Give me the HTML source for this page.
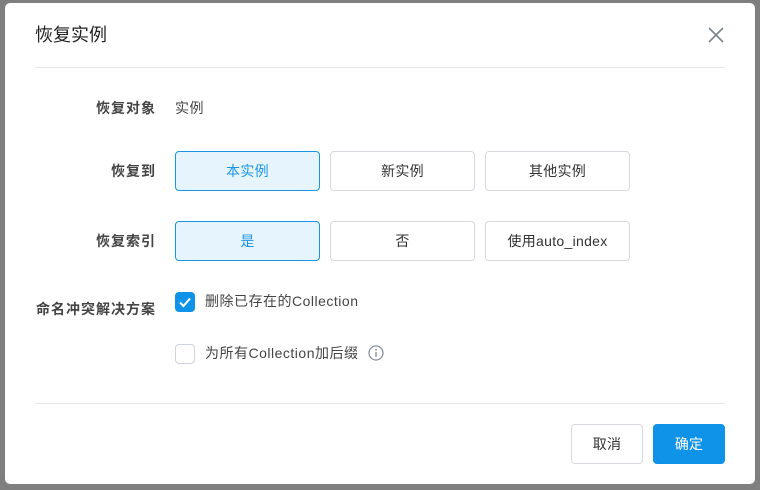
<!DOCTYPE html>
<html><head><meta charset="utf-8">
<style>
*{margin:0;padding:0;box-sizing:border-box}
body{width:760px;height:490px;background:#7f7f7f;position:relative;overflow:hidden;font-family:"Liberation Sans","Noto Sans CJK SC",sans-serif;}
.modal{position:absolute;left:5px;top:3px;width:750px;height:481px;background:#fff;border-radius:5px;}
.a{position:absolute}
.title{left:35px;top:22px;font-size:18px;color:#222;line-height:26px}
.hr{height:1px;background:#e4e6ea;left:35px;width:690px}
.lbl{font-size:14px;font-weight:bold;color:#444;width:155px;text-align:right;left:0;line-height:20px;letter-spacing:1px}
.btn{height:40px;width:145px;border:1px solid #d6d9de;border-radius:4px;font-size:14px;color:#333;display:flex;align-items:center;justify-content:center;letter-spacing:0.3px}
.sel{background:#e6f5fd;border-color:#1a95e6;color:#1a95e6}
.cb{width:20px;height:20px;border-radius:4px;border:1px solid #d0d4da;background:#fff}
.cb.on{background:#0f93e8;border-color:#0f93e8}
.t{font-size:14px;color:#444;line-height:20px;letter-spacing:0.5px}
</style></head><body>
<div class="modal">
<div class="a title" style="left:30px;top:19px">恢复实例</div>
<svg class="a" style="left:703px;top:24px" width="16" height="16" viewBox="0 0 16 16"><path d="M1 1L15 15M15 1L1 15" stroke="#7b8590" stroke-width="1.6"/></svg>
<div class="a hr" style="left:30px;top:64px"></div>

<div class="a lbl" style="top:95px;width:151px">恢复对象</div>
<div class="a t" style="left:170px;top:95px">实例</div>

<div class="a lbl" style="top:158px;width:151px">恢复到</div>
<div class="a btn sel" style="left:170px;top:148px">本实例</div>
<div class="a btn" style="left:325px;top:148px">新实例</div>
<div class="a btn" style="left:480px;top:148px">其他实例</div>

<div class="a lbl" style="top:228px;width:151px">恢复索引</div>
<div class="a btn sel" style="left:170px;top:218px">是</div>
<div class="a btn" style="left:325px;top:218px">否</div>
<div class="a btn" style="left:480px;top:218px">使用auto_index</div>

<div class="a lbl" style="top:296px;width:151px">命名冲突解决方案</div>
<div class="a cb on" style="left:170px;top:289px"><svg width="20" height="20" viewBox="0 0 20 20" style="position:absolute;left:-1px;top:-1px"><path d="M5 10.5L8.5 14L15 6.5" stroke="#fff" stroke-width="2" fill="none"/></svg></div>
<div class="a t" style="left:200px;top:288px">删除已存在的Collection</div>
<div class="a cb" style="left:170px;top:341px"></div>
<div class="a t" style="left:200px;top:340px">为所有Collection加后缀</div>
<svg class="a" style="left:363px;top:342px" width="16" height="16" viewBox="0 0 16 16"><circle cx="8" cy="8" r="7" stroke="#8a93a0" stroke-width="1.3" fill="none"/><circle cx="8" cy="4.8" r="0.9" fill="#8a93a0"/><path d="M8 7v5" stroke="#8a93a0" stroke-width="1.4"/></svg>

<div class="a hr" style="left:30px;top:400px"></div>
<div class="a btn" style="left:566px;top:421px;width:72px">取消</div>
<div class="a btn" style="left:648px;top:421px;width:72px;background:#0f93e8;border-color:#0f93e8;color:#fff">确定</div>
</div>
</body></html>
